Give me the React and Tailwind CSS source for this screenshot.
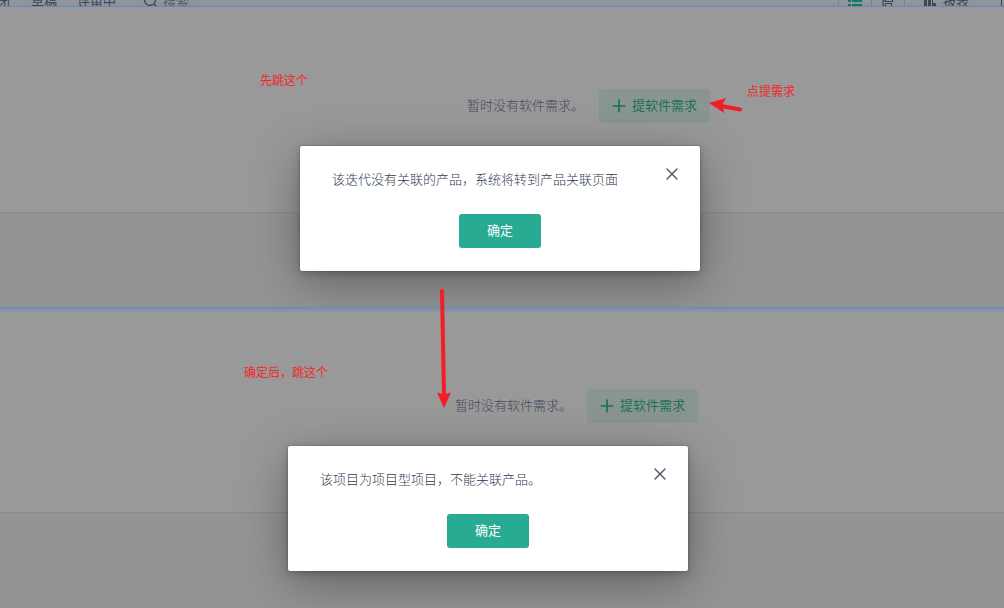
import { Plus, X } from "lucide-react";

const FONT = "font-['Noto_Sans_CJK_SC','Liberation_Sans',sans-serif]";

function Toolbar() {
  return (
    <header className="relative h-[7px] overflow-hidden bg-gradient-to-b from-[#93969a] to-[#8792a0] text-[#3c4657]">
      <div className="-mt-[7px] flex h-4 items-center text-[13px] leading-4">
        <a href="#closed" className="-ml-4 w-[27px] whitespace-nowrap">已闭</a>
        <a href="#draft" className="ml-5">草稿</a>
        <a href="#reviewing" className="ml-5">评审中</a>
        <button type="button" className="ml-[18px] flex h-4 w-[62px] shrink-0 items-center gap-1 rounded-b-full border-x border-[#858b93] pl-2">
          <svg viewBox="0 0 16 16" className="size-4 shrink-0" fill="none" stroke="currentColor" strokeWidth="1.3">
            <circle cx="7" cy="7" r="5.5" />
            <path d="M11 11l3.500 3" />
          </svg>
          <span className="whitespace-nowrap text-[13px] leading-4 text-[#565e6a]">搜索</span>
        </button>
        <div className="ml-auto flex h-4 items-center">
          <button type="button" aria-label="列表" className="flex h-4 w-[34px] items-center justify-center border-x border-[#7d838b] text-[#197563]">
            <svg viewBox="0 0 14 14" className="size-[14px]" fill="currentColor">
              <path d="M0 1h3v2H0zM4 1h10v2H4zM0 6h3v2H0zM4 6h10v2H4zM0 10h3v2H0zM4 10h10v2H4z" />
            </svg>
          </button>
          <button type="button" aria-label="层级" className="flex h-4 w-[33px] items-center justify-center border-r border-[#7d838b]">
            <svg viewBox="0 0 14 14" className="size-[14px]" fill="none" stroke="currentColor" strokeWidth="1.2">
              <path d="M2 1v11h3M2 7h3M4.500 4.500h7v3h-7zM4.500 9.500h6v3h-6z" />
            </svg>
          </button>
          <button type="button" className="ml-[18px] flex h-4 items-center gap-[6px]">
            <svg viewBox="0 0 14 14" className="size-[14px]" fill="currentColor">
              <path d="M1 1h3v11H1zM5 3h3v9H5zM9 6h1v6H9zM10 9h3v3h-3z" />
            </svg>
            <span className="leading-4">报表</span>
          </button>
          <span className="ml-8 mr-[2px] h-4 w-px bg-[#3c4657]" />
        </div>
      </div>
      <div className="absolute inset-x-0 bottom-0 h-px bg-[#668bb8]" />
    </header>
  );
}

function EmptyState() {
  return (
    <div className="flex items-center gap-[15px] text-[13px] leading-5">
      <p className="pb-[2px] font-light text-[#424b5a]">暂时没有软件需求。</p>
      <button type="button" className="flex h-[34px] items-center gap-[3px] rounded-[3px] bg-[#899690] pl-[10px] pr-[13px] text-[#1d705f]">
        <Plus className="size-5" strokeWidth={2} />
        <span className="pb-[2px]">提软件需求</span>
      </button>
    </div>
  );
}

function Dialog({ message }) {
  return (
    <div
      role="dialog"
      aria-label={message}
      className="relative flex h-[125px] w-[400px] flex-col items-center rounded-[2px] bg-white pt-[23px] text-[13px] leading-5 shadow-[0_0_1px_1px_rgba(0,0,0,0.1),0_3px_8px_rgba(0,0,0,0.18),0_12px_48px_rgba(0,0,0,0.34)]"
    >
      <p className="w-full pl-8 font-light text-[#313c52]">{message}</p>
      <button type="button" aria-label="关闭" className="absolute right-[18px] top-[18px] flex size-5 items-center justify-center text-[#4c5568]">
        <X className="size-5" strokeWidth={1.6} />
      </button>
      <button type="button" className="mt-[25px] h-[34px] w-[82px] rounded-[3px] bg-[#29aa93] pb-[2px] text-white">确定</button>
    </div>
  );
}

export default function App() {
  return (
    <div className={`flex min-h-screen flex-col overflow-hidden bg-[#949494] ${FONT}`}>
      <Toolbar />

      <section className="relative h-[300px] shrink-0">
        <div className="flex h-[206px] items-start justify-center border-b border-[#8c8c8d] bg-[#999999] pl-[173px] pt-[82px]">
          <EmptyState />
        </div>
        <div className="absolute inset-x-0 top-[139px] flex justify-center pr-1">
          <Dialog message="该迭代没有关联的产品，系统将转到产品关联页面" />
        </div>
        <p className="absolute left-[260px] top-[64px] text-xs leading-[18px] text-[#f3252b]">先跳这个</p>
        <p className="absolute left-[747px] top-[75px] text-xs leading-[18px] text-[#f3252b]">点提需求</p>
        <svg viewBox="0 0 34 18" className="absolute left-[709px] top-[89px] h-[18px] w-[34px]">
          <path d="M12 10l19 3.500" stroke="#f01f26" strokeWidth="4" strokeLinecap="round" />
          <path d="M0 7L17 2L13.500 8.500L15 17z" fill="#f01f26" />
        </svg>
      </section>

      <section className="relative min-h-[301px] flex-1">
        <div className="flex h-[206px] items-start justify-center border-b border-[#8c8c8d] bg-[#999999] pl-[149px] pt-[82px]">
          <EmptyState />
        </div>
        <div className="absolute inset-x-0 top-0 h-[7px] bg-gradient-to-b from-[#668bb8] via-[#8994a2] to-[#999999]" />
        <div className="absolute inset-x-0 top-[139px] flex justify-center pr-7">
          <Dialog message="该项目为项目型项目，不能关联产品。" />
        </div>
        <p className="absolute left-[244px] top-[56px] text-xs leading-[18px] text-[#f3252b]">确定后，跳这个</p>
        <svg viewBox="0 0 16 120" className="absolute -top-[19px] left-[436px] h-[120px] w-4">
          <path d="M6 3l2 104" stroke="#f01f26" strokeWidth="4" strokeLinecap="round" />
          <path d="M8 120L1 104.500L8 106.500L15 104.500z" fill="#f01f26" />
        </svg>
      </section>
    </div>
  );
}
